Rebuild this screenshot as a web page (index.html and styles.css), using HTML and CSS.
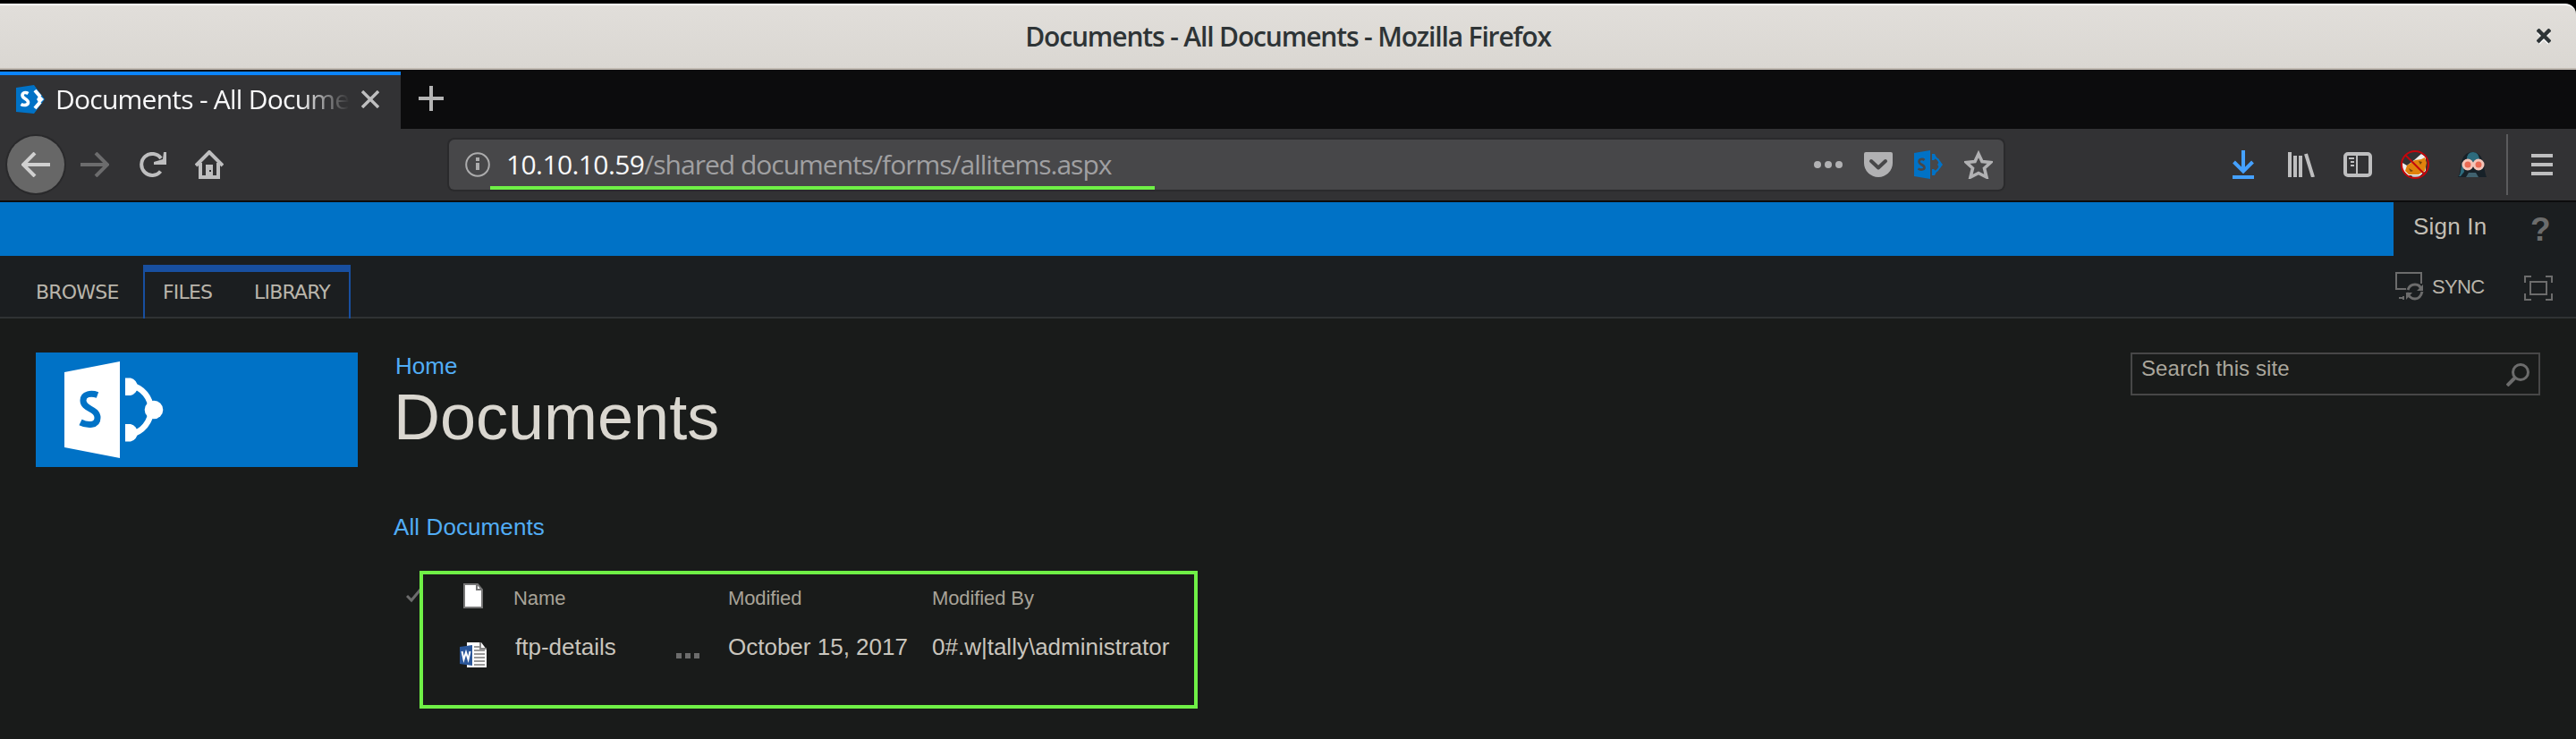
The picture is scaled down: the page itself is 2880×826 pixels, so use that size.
FILE: index.html
```html
<!DOCTYPE html>
<html lang="en">
<head>
<meta charset="utf-8">
<title>Documents - All Documents</title>
<link rel="stylesheet" href="styles.css">
</head>
<body>
<header class="titlebar">
  <span class="window-title">Documents - All Documents - Mozilla Firefox</span>
  <svg class="window-close" width="16" height="18" viewBox="0 0 16 18"><path d="M2 4l12 12M14 4L2 16" stroke="#fff" stroke-width="4"/><path d="M1 1l14 14M15 1L1 15" stroke="#2e3436" stroke-width="4.4"/></svg>
</header>

<div class="tabstrip">
  <div class="tab">
    <svg width="32" height="32" viewBox="0 0 32 32"><path d="M0 3L20 0l12 16-12 16L0 30z" fill="#0072c6"/><path d="M21 6l6 7M21 26l6-7" stroke="#fff" stroke-width="4"/><path d="M26 11l5 5-5 5-3-5z" fill="#fff"/><path d="M13.500 9.500c-3-2-6.500-1-6.500 2 0 4 6.500 4 6.500 8 0 3-5 4-8 2" fill="none" stroke="#fff" stroke-width="3.600"/></svg>
    <span class="tab-title">Documents - All Documents</span>
    <svg class="tab-close" width="20" height="20" viewBox="0 0 20 20"><path d="M1 1l18 18M19 1L1 19" stroke="#bebebf" stroke-width="3.400"/></svg>
  </div>
  <svg class="new-tab" width="28" height="28" viewBox="0 0 28 28"><path d="M14 0v28M0 14h28" stroke="#b4b4b4" stroke-width="4"/></svg>
</div>

<nav class="toolbar">
  <div class="nav-buttons">
    <div class="back"><svg width="32" height="28" viewBox="0 0 32 28"><path d="M32 14H3M15 1L2 14l13 13" fill="none" stroke="#d0d0d0" stroke-width="4"/></svg></div>
    <svg class="forward" width="32" height="28" viewBox="0 0 32 28"><path d="M0 14h29M17 1l13 13-13 13" fill="none" stroke="#6c6c6d" stroke-width="4"/></svg>
    <svg class="reload" width="30" height="28" viewBox="0 0 30 28"><path d="M23.5 21.5A12 12 0 1 1 24 7" fill="none" stroke="#bebebf" stroke-width="4"/><path d="M30 0v14H16V11l10-3 1-8z" fill="#bebebf"/></svg>
    <svg class="home" width="32" height="32" viewBox="0 0 32 32"><path d="M1 17L16 2l15 15M6 14v16h20V14" fill="none" stroke="#bebebf" stroke-width="4"/><path d="M12 30V16h8v14z" fill="#bebebf"/><path d="M16 22h2v2h-2z" fill="#323234"/></svg>
  </div>
  <div class="urlbar">
    <svg width="28" height="28" viewBox="0 0 28 28"><circle cx="14" cy="14" r="12.8" fill="none" stroke="#acacad" stroke-width="2"/><path d="M12 6h4v4h-4zM12 12h4v8h-4z" fill="#acacad"/></svg>
    <div class="url"><b>10.10.10.59</b>/shared documents/forms/allitems.aspx</div>
    <div class="url-actions">
      <svg width="32" height="32" viewBox="0 0 32 32"><g fill="#b1b1b3"><circle cx="4" cy="16" r="4"/><circle cx="16" cy="16" r="4"/><circle cx="28" cy="16" r="4"/></g></svg>
      <svg width="32" height="32" viewBox="0 0 32 32"><path d="M2 2h28q2 0 2 2v10a16 16 0 0 1-32 0V4q0-2 2-2z" fill="#b1b1b3"/><path d="M8 12l8 7.500 8-7.500" fill="none" stroke="#474749" stroke-width="4" stroke-linecap="round" stroke-linejoin="round"/></svg>
      <svg width="32" height="32" viewBox="0 0 32 32"><path d="M0 3L18 0v32L0 29z" fill="#0072c6"/><path d="M11.500 11c-2-2-6-1-6 1.500 0 4 6 3 6 7 0 2-4 3-7 1" fill="none" stroke="#474749" stroke-width="2.600"/><path d="M21 7q7 2 8 9-1 7-8 9" fill="none" stroke="#0072c6" stroke-width="2"/><path d="M20 4h3l2 4-3 3h-2zM20 28h3l2-4-3-3h-2zM26 16l3-4 3 4-3 4z" fill="#0072c6"/></svg>
      <svg width="32" height="32" viewBox="0 0 32 32"><path d="M16 4l4 8.500 9.500 1-7 6.500 2.500 10-9-4.500L7 30l2.500-10-7-6.500 9.500-1z" fill="none" stroke="#b1b1b3" stroke-width="3.600"/></svg>
    </div>
    <div class="url-mark"></div>
  </div>
  <div class="tools">
    <svg class="download" width="24" height="32" viewBox="0 0 24 32"><path d="M12 0v24M1.500 13L12 23.500 22.500 13M0 30h24" fill="none" stroke="#45a1ff" stroke-width="4"/></svg>
    <svg class="library" width="30" height="28" viewBox="0 0 30 28"><path d="M2 0v28M8 4v24M14 4v24M20 2l8 26" stroke="#bebebf" stroke-width="4"/></svg>
    <svg class="sidebar" width="32" height="28" viewBox="0 0 32 28"><rect x="2" y="2" width="28" height="24" rx="3" fill="none" stroke="#bebebf" stroke-width="4"/><path d="M15 3v22M6 7h6M8 11h4M8 15h4" stroke="#bebebf" stroke-width="2"/></svg>
    <svg class="noproxy" width="32" height="32" viewBox="0 0 32 32"><circle cx="16" cy="16" r="15" fill="#323234"/><path d="M2 14l5 3 8-6 8-7 5 3v16l-6 5H8l-6-6z" fill="#eee"/><path d="M7 17l9-6 7-1 4-2 2 6-2 9-7 4H9l-4-4z" fill="#e0820c"/><path d="M9 20l5 3-3 1zM20 12l4 1-2 3z" fill="#75420c"/><path d="M12 28h10l-2 3h-6z" fill="#bbb"/><circle cx="16" cy="16" r="15" fill="none" stroke="#c4060c" stroke-width="2"/><path d="M5 5l22 22" stroke="#c4060c" stroke-width="2"/></svg>
    <svg class="vader" width="32" height="32" viewBox="0 0 32 32"><path d="M0 30c3-5 2-12 5-20Q8 2 16 2t11 8c3 8 2 12 5 20z" fill="#172128"/><path d="M10 10Q10 2 17 2t7 10l-7 1zM1 29c3-4 2-10 4-16l2 11-4 5z" fill="#2d6b7d"/><circle cx="11" cy="16" r="5" fill="#e96a54" stroke="#f3c5b9" stroke-width="3"/><circle cx="23" cy="16" r="5" fill="#e96a54" stroke="#f3c5b9" stroke-width="3"/><path d="M12 25h8l3 5H9z" fill="#40616e"/></svg>
    <span class="divider"></span>
    <svg class="menu" width="24" height="24" viewBox="0 0 24 24"><path d="M0 2h24M0 12h24M0 22h24" stroke="#bebebf" stroke-width="4"/></svg>
  </div>
</nav>

<div class="suitebar">
  <div class="suite-fill"></div>
  <div class="signin">Sign In</div>
  <div class="help">?</div>
</div>

<div class="ribbon">
  <div class="rtab browse">BROWSE</div>
  <div class="rgroup"><div class="rtab files">FILES</div><div class="rtab">LIBRARY</div></div>
  <div class="ribbon-actions">
    <svg width="32" height="32" viewBox="0 0 32 32"><path d="M12 19H1V1h28v12M4 29h6M9 27v4" fill="none" stroke="#6c6c6c" stroke-width="2"/><path d="M14 20q2-6 8-6t7 6M30 22q-2 8-8 8t-9-7" fill="none" stroke="#6c6c6c" stroke-width="3"/><path d="M31 14v7h-7zM12 31v-8h7z" fill="#6c6c6c"/></svg>
    <span class="sync">SYNC</span>
    <svg class="focus" width="32" height="28" viewBox="0 0 32 28"><path d="M1 8V1h7M24 1h7v7M31 20v7h-7M8 27H1v-7M7 7h18v14H7z" fill="none" stroke="#6c6c6c" stroke-width="2"/></svg>
  </div>
</div>

<main class="page">
  <div class="logo">
    <svg width="150" height="128" viewBox="0 0 150 128"><path d="M32 22L94 10v108L32 106z" fill="#fff"/><path d="M69 47.500C62 45 53 46 53 53.500 53 64 69 62 69 73 69 82 58 82 50 78" fill="none" stroke="#0072c6" stroke-width="7"/><path d="M106 36.500A28 28 0 0 1 106 91.500" fill="none" stroke="#fff" stroke-width="6.500"/><path d="M100 28.500h6a10 10 0 0 1 0 19.500h-6zM100 80h6a10 10 0 0 1 0 19.500h-6z" fill="#fff"/><circle cx="132" cy="64" r="10.300" fill="#fff"/></svg>
  </div>
  <section class="content">
    <a class="crumb">Home</a>
    <h1>Documents</h1>
    <a class="view">All Documents</a>
    <div class="list">
      <div class="cell-check"><svg width="18" height="16" viewBox="0 0 18 16"><path d="M1 8l5 5L16 1" fill="none" stroke="#6c6c6c" stroke-width="3"/></svg></div>
      <div class="cell-icon"><svg class="file" width="22" height="28" viewBox="0 0 22 28"><path d="M1 1h15l5 6v20H1z" fill="#fff" stroke="#777" stroke-width="2"/><path d="M15 1v6h6" fill="none" stroke="#777" stroke-width="2"/></svg></div>
      <div class="head">Name</div><div></div><div class="head">Modified</div><div class="head">Modified By</div>
      <div></div>
      <div class="cell-icon"><svg class="word" width="30" height="28" viewBox="0 0 30 28"><path d="M8 0h16l6 8v20H8z" fill="#fff"/><path d="M23 0v7h7" fill="none" stroke="#888" stroke-width="2"/><path d="M16 5h6M16 9h12M16 13h12M16 17h12M16 21h12M16 25h12" stroke="#999" stroke-width="2"/><path d="M0 5l14-2v23L0 24z" fill="#2b579a"/><path d="M2.500 10l2 9L7 11l2.500 8 2-9" fill="none" stroke="#fff" stroke-width="2"/></svg></div>
      <div class="cell name">ftp-details</div>
      <div class="cell-dots"><svg width="26" height="6" viewBox="0 0 26 6"><path d="M0 0h6v6H0zM10 0h6v6h-6zM20 0h6v6h-6z" fill="#6c6c6c"/></svg></div>
      <div class="cell">October 15, 2017</div>
      <div class="cell">0#.w|tally\administrator</div>
      <div class="list-mark"></div>
    </div>
  </section>
  <div class="search"><span>Search this site</span><svg width="26" height="26" viewBox="0 0 26 26"><circle cx="16" cy="10" r="8.500" fill="none" stroke="#6c6c6c" stroke-width="3"/><path d="M10 16l-9 9" stroke="#6c6c6c" stroke-width="4"/></svg></div>
</main>
</body>
</html>
```
FILE: styles.css
```css
* { box-sizing: border-box; }
body { margin: 0; padding-top: 4px; width: 2880px; height: 826px; overflow: hidden; background: #000; font-family: "Liberation Sans", Arial, sans-serif; }
svg { display: block; flex: none; }

.titlebar { height: 74px; display: flex; align-items: center; justify-content: center; position: relative; background: linear-gradient(#e1deda, #dad7d2); border-top: 2px solid #fbfaf9; border-bottom: 2px solid #bfb8b0; border-radius: 0 12px 0 0; }
.window-title { font: 600 30px/40px "Open Sans", sans-serif; color: #2e3436; letter-spacing: -1.15px; white-space: nowrap; }
.window-close { position: absolute; right: 28px; top: 26px; }

.tabstrip { height: 66px; padding-top: 2px; background: #0c0c0d; display: flex; }
.tab { width: 448px; border-top: 4px solid #0a84ff; background: #323234; display: flex; align-items: center; padding: 0 24px 7px 18px; }
.tab-title { width: 332px; margin-left: 12px; overflow: hidden; white-space: nowrap; font: 30px/40px "Open Sans", sans-serif; letter-spacing: -0.75px; color: #f9f9fa; -webkit-mask-image: linear-gradient(90deg, #000 82%, transparent 99%); mask-image: linear-gradient(90deg, #000 82%, transparent 99%); }
.tab-close { margin-left: 10px; }
.new-tab { margin: 16px 0 0 20px; }

.toolbar { height: 82px; background: #323234; border-bottom: 2px solid #0c0c0d; display: flex; align-items: center; }
.nav-buttons { width: 502px; display: flex; align-items: center; padding-left: 8px; }
.back { width: 64px; height: 64px; border-radius: 50%; background: #676767; box-shadow: 0 0 0 2px #29292b; display: flex; align-items: center; justify-content: center; }
.forward { margin-left: 18px; }
.reload { margin-left: 34px; }
.home { margin-left: 32px; }
.urlbar { position: relative; width: 1738px; height: 56px; border-radius: 6px; background: #474749; box-shadow: 0 0 0 2px #2a2a2c; display: flex; align-items: center; padding: 0 12px 0 18px; }
.url { flex: 1; margin-left: 18px; font: 30px/40px "Open Sans", sans-serif; letter-spacing: -1px; color: #a0a0a2; white-space: nowrap; }
.url b { font-weight: 400; color: #f9f9fa; letter-spacing: -0.6px; }
.url-actions { display: flex; gap: 24px; }
.url-mark { position: absolute; left: 46px; bottom: 0; width: 743px; height: 4px; background: #6ff046; }
.tools { flex: 1; display: flex; align-items: center; padding-left: 256px; }
.library { margin-left: 38px; }
.sidebar { margin-left: 32px; }
.noproxy { margin-left: 32px; }
.vader { margin-left: 32px; }
.divider { width: 2px; height: 68px; background: #5b5b5d; margin-left: 22px; }
.menu { margin-left: 26px; }

.suitebar { height: 60px; background: #1b1e20; display: flex; color: #c3beb4; }
.suite-fill { width: 2676px; background: #0072c6; }
.signin { padding: 12px 0 0 22px; width: 153px; font-size: 26px; line-height: 30px; letter-spacing: 0.2px; }
.help { font-weight: 700; font-size: 37px; line-height: 40px; padding-top: 11px; color: #6c6c6c; }

.ribbon { height: 70px; background: #1b1e20; border-bottom: 2px solid #2f3233; display: flex; }
.rtab { font: 22px/28px "DejaVu Sans", sans-serif; letter-spacing: -0.8px; color: #b9b5ab; }
.browse { width: 160px; padding: 27px 0 0 40px; }
.rgroup { width: 232px; height: 60px; margin-top: 10px; border: 2px solid #184fa0; border-top-width: 8px; border-bottom: 0; display: flex; padding: 9px 0 0 20px; }
.files { width: 102px; }
.ribbon-actions { margin-left: auto; padding: 18px 26px 0 0; display: flex; }
.sync { width: 103px; margin-left: 9px; font-size: 22px; line-height: 28px; padding-top: 3px; letter-spacing: -0.7px; color: #b9b5ab; }
.focus { margin-top: 4px; }

.page { height: 470px; background: #191b1a; display: flex; padding: 38px 40px 0; }
.logo { width: 360px; height: 128px; background: #0072c6; }
.content { margin-left: 40px; flex: 1; }
.crumb, .view { display: block; font-size: 26px; line-height: 30px; color: #51adf6; }
.crumb { padding-left: 2px; }
h1 { margin: 2px 0 0; font-size: 72px; line-height: 80px; font-weight: 400; color: #dad7d0; }
.view { margin-top: 68px; letter-spacing: 0.1px; }
.list { position: relative; margin: 42px 0 0; display: grid; grid-template-columns: 72px 62px 180px 60px 228px 300px; grid-template-rows: 60px 80px; }
.list > div { white-space: nowrap; }
.cell-check { padding: 12px 0 0 14px; }
.cell-icon { padding-left: 2px; }
.file { margin: 6px 0 0 4px; }
.word { margin-top: 12px; }
.head { font-size: 22px; line-height: 28px; padding-top: 9px; color: #a8a398; letter-spacing: -0.1px; }
.cell { font-size: 26px; line-height: 30px; color: #c9c5bd; padding-top: 2px; }
.name { padding-left: 2px; }
.cell-dots { padding: 24px 0 0 2px; }
.list-mark { position: absolute; left: 29px; top: -8px; width: 870px; height: 154px; border: 4px solid #6ff046; }
.search { width: 458px; height: 48px; border: 2px solid #474747; display: flex; justify-content: space-between; padding: 2px 10px 0 10px; font-size: 24px; line-height: 28px; color: #aba79d; letter-spacing: 0.1px; }
.search svg { margin-top: 8px; }
```
